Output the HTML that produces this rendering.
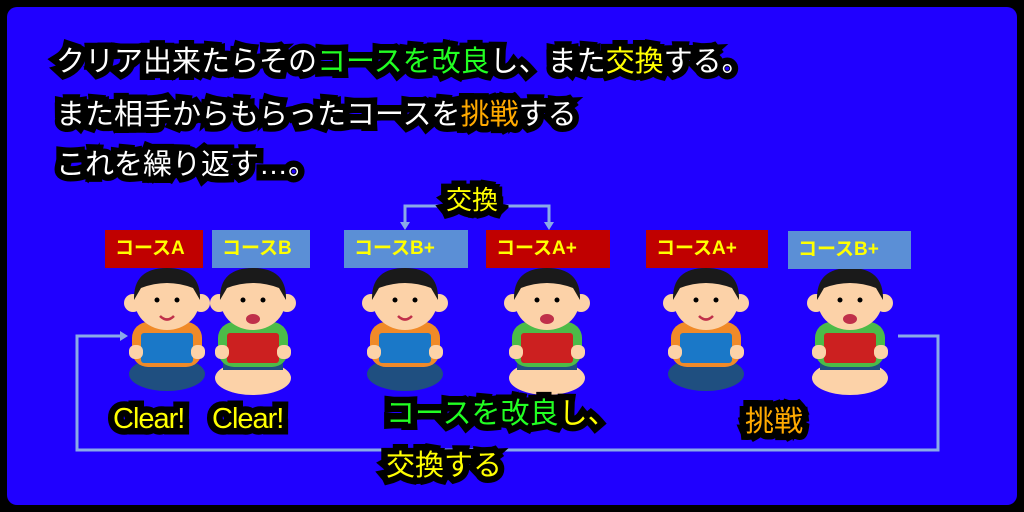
<!DOCTYPE html>
<html><head><meta charset="utf-8"><style>
html,body{margin:0;padding:0;background:#000;}
#c{position:absolute;left:0;top:0;width:1024px;height:512px;background:#000;overflow:hidden;}
#b{position:absolute;left:7px;top:7px;width:1010px;height:498px;background:#2000ff;border-radius:10px;}
.t{position:absolute;font-family:"Liberation Sans","Noto Sans CJK JP",sans-serif;color:#fff;white-space:nowrap;}
.s{-webkit-text-stroke:13px #000;color:#000 !important;}
.s span{color:#000 !important;}
.big{font-size:29px;line-height:34px;}
.g{color:#22ff22}.y{color:#ffff00}.o{color:#ffaa00}
.lb{position:absolute;height:38px;font-family:"Liberation Sans","Noto Sans CJK JP",sans-serif;font-weight:bold;font-size:19px;color:#ffff00;line-height:38px;padding-left:10px;box-sizing:border-box;}
.r{background:#c00000}.bl{background:#5b8fd6}
</style></head><body><div id="c"><div id="b"></div>
<svg width="1024" height="512" style="position:absolute;left:0;top:0">
<g stroke="#8aaae8" stroke-width="3" fill="none">
<polyline points="123,336 77,336 77,450 938,450 938,336 898,336"/>
<polyline points="405,224 405,206 549,206 549,224"/>
</g>
<g fill="#8aaae8"><polygon points="120,331 128,336 120,341"/><polygon points="400,222 410,222 405,230"/><polygon points="544,222 554,222 549,230"/></g>
<g id="kids"></g>
</svg>
<div class="t big" style="left:56px;top:45px">クリア出来たらその<span class="g">コースを改良</span>し、また<span class="y">交換</span>する。</div>
<div class="t big" style="left:56px;top:98px">また相手からもらったコースを<span class="o">挑戦</span>する</div>
<div class="t big" style="left:56px;top:148px">これを繰り返す…。</div>
<div class="t y" style="left:446px;top:180px;font-size:26px">交換</div>
<div class="lb r" style="left:105px;top:230px;width:98px">コースA</div>
<div class="lb bl" style="left:212px;top:230px;width:98px">コースB</div>
<div class="lb bl" style="left:344px;top:230px;width:124px">コースB+</div>
<div class="lb r" style="left:486px;top:230px;width:124px">コースA+</div>
<div class="lb r" style="left:646px;top:230px;width:122px">コースA+</div>
<div class="lb bl" style="left:788px;top:231px;width:123px">コースB+</div>
<div class="t y" style="left:113px;top:403px;font-size:29px;letter-spacing:-1px">Clear!</div>
<div class="t y" style="left:212px;top:403px;font-size:29px;letter-spacing:-1px">Clear!</div>
<div class="t" style="left:386px;top:390px;font-size:29px"><span class="g">コースを改良</span><span class="y">し、</span></div>
<div class="t y" style="left:386px;top:442px;font-size:29px">交換する</div>
<div class="t o" style="left:745px;top:398px;font-size:29px">挑戦</div>
</div>
<script>
document.querySelectorAll('.t').forEach(function(e){var c=e.cloneNode(true);c.classList.add('s');c.setAttribute('aria-hidden','true');e.parentNode.insertBefore(c,e);});
var k=[[167,0],[253,1],[405,0],[547,1],[706,0],[850,1]],s='';
k.forEach(function(a){var x=a[0],g=a[1];
var body=g?'#4cbb48':'#f08a28',tab=g?'#cc2020':'#1a78c8',leg=g?'#fcd2a8':'#1f4f80';
s+='<ellipse cx="'+x+'" cy="'+(g?378:374)+'" rx="38" ry="17" fill="'+leg+'"/>';
if(g)s+='<rect x="'+(x-30)+'" y="362" width="60" height="8" fill="#1f4f80"/>';
s+='<rect x="'+(x-35)+'" y="322" width="70" height="45" rx="16" fill="'+body+'"/>';
s+='<circle cx="'+(x-34)+'" cy="303" r="9" fill="#fcd2a8"/><circle cx="'+(x+34)+'" cy="303" r="9" fill="#fcd2a8"/>';
s+='<ellipse cx="'+x+'" cy="302" rx="32" ry="28" fill="#fcd2a8"/>';
s+='<path d="M'+(x-33)+' 300 Q'+(x-34)+' 268 '+x+' 268 Q'+(x+34)+' 268 '+(x+33)+' 300 L'+(x+26)+' 288 Q'+x+' 278 '+(x-26)+' 288Z" fill="#1a1a1a"/>';
s+='<circle cx="'+(x-10)+'" cy="300" r="2.5" fill="#000"/><circle cx="'+(x+10)+'" cy="300" r="2.5" fill="#000"/>';
s+=g?'<ellipse cx="'+x+'" cy="319" rx="7" ry="5" fill="#c0304a"/>':'<path d="M'+(x-7)+' 316 Q'+x+' 323 '+(x+7)+' 316" stroke="#c0304a" stroke-width="2.5" fill="none"/>';
s+='<rect x="'+(x-26)+'" y="333" width="52" height="30" rx="3" fill="'+tab+'"/>';
s+='<rect x="'+(x-38)+'" y="345" width="14" height="14" rx="6" fill="#fcd2a8"/><rect x="'+(x+24)+'" y="345" width="14" height="14" rx="6" fill="#fcd2a8"/>';
});
document.getElementById('kids').innerHTML=s;
</script>
</body></html>
